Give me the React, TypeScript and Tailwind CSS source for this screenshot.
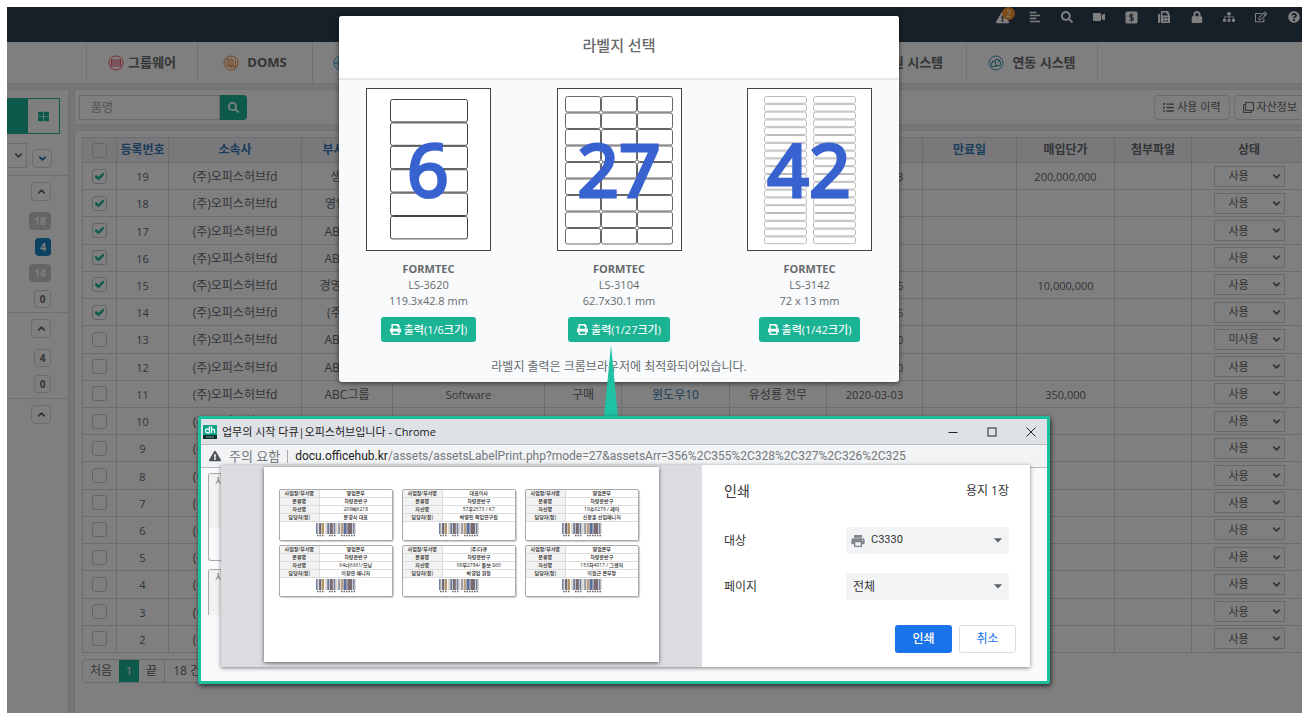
import { useState } from "react"
import {
  FaAlignLeft,
  FaCheck,
  FaExclamationTriangle,
  FaFax,
  FaListUl,
  FaLock,
  FaPrint,
  FaQuestionCircle,
  FaRegClone,
  FaRegEdit,
  FaSearch,
  FaSitemap,
  FaThLarge,
  FaVideo,
} from "react-icons/fa"
import { MdArrowDropDown, MdPrint } from "react-icons/md"
import { ChevronDown, ChevronUp } from "lucide-react"

const assets = [
  { id: 19, dept: "생산부", date: "2020-03-03", price: "200,000,000", checked: true },
  { id: 18, dept: "영업본부", checked: true },
  { id: 17, dept: "ABC그룹", checked: true },
  { id: 16, dept: "ABC그룹", checked: true },
  { id: 15, dept: "경영지원부", date: "2020-02-26", price: "10,000,000", checked: true },
  { id: 14, dept: "(주)다큐", date: "2020-02-26", checked: true },
  { id: 13, dept: "ABC그룹", date: "2020-02-20", status: "미사용" },
  { id: 12, dept: "ABC그룹", date: "2020-02-20" },
  { id: 11, dept: "ABC그룹", kind: "Software", how: "구매", name: "윈도우10", user: "유성룡 전무", date: "2020-03-03", price: "350,000" },
  { id: 10 },
  { id: 9 },
  { id: 8 },
  { id: 7 },
  { id: 6 },
  { id: 5 },
  { id: 4 },
  { id: 3 },
  { id: 2 },
]

const columns = [
  { id: "no", title: "등록번호", width: "w-[52px]", link: true },
  { id: "company", title: "소속사", width: "w-[133px]", link: true },
  { id: "dept", title: "부서/팀명", width: "w-[91px]", link: true },
  { id: "kind", title: "", width: "" },
  { id: "how", title: "", width: "w-[77px]" },
  { id: "name", title: "", width: "w-[108px]" },
  { id: "user", title: "", width: "w-[97px]" },
  { id: "date", title: "", width: "w-[96px]" },
  { id: "expire", title: "만료일", width: "w-[94px]", link: true },
  { id: "price", title: "매입단가", width: "w-[98px]" },
  { id: "file", title: "첨부파일", width: "w-[77px]" },
  { id: "status", title: "상태", width: "w-[115px]" },
]

const menus = [
  { id: "groupware", title: "그룹웨어", color: "text-[#ed5565]", width: "w-[111px] justify-center", gap: "gap-1", shape: "lines" },
  { id: "doms", title: "DOMS", color: "text-[#f8862f]", width: "w-[115px] justify-center", gap: "gap-2", shape: "docs" },
  { id: "home", title: "", color: "text-[#2c9fd8]", width: "w-[520px] pl-5", gap: "gap-2", shape: "globe" },
  { id: "support", title: "지원 시스템", color: "text-[#1c84c6]", width: "w-[134px] justify-center", gap: "gap-2", shape: "globe" },
  { id: "link", title: "연동 시스템", color: "text-[#3c9cb0]", width: "w-[132px] justify-center", gap: "gap-2", shape: "copy" },
]

const sheets = [
  { count: "6", code: "LS-3620", size: "119.3x42.8 mm", cols: 1, rows: 6, x: 24, y: 11, w: 77, pitchX: 0, pitchY: 23.4, stroke: "#444" },
  { count: "27", code: "LS-3104", size: "62.7x30.1 mm", cols: 3, rows: 9, x: 8, y: 8, w: 35, pitchX: 36, pitchY: 16.5, stroke: "#666" },
  { count: "42", code: "LS-3142", size: "72 x 13 mm", cols: 2, rows: 19, x: 17, y: 8, w: 42, pitchX: 49, pitchY: 7.8, stroke: "#bbb" },
]

const labels = [
  ["영업본부", "차량운반구", "209버6218", "문경식 대표"],
  ["대표이사", "차량운반구", "57우2573 / K7", "박영민 책임연구원"],
  ["영업본부", "차량운반구", "19수9279 / 레이", "신광훈 선임매니저"],
  ["영업본부", "차량운반구", "64너6361/모닝", "이창연 매니저"],
  ["(주)다큐", "차량운반구", "09부2784/ 볼보-S60", "박경업 회장"],
  ["영업본부", "차량운반구", "153하4917 / 그랜저", "이원근 본부장"],
]

const labelHeads = ["사업장/부서명", "분류명", "자산명", "담당자(정)"]

function MenuIcon({ shape }: { shape: string }) {
  return (
    <svg viewBox="0 0 16 16" className="h-4 w-4 shrink-0" fill="none" stroke="currentColor" strokeWidth="1">
      <circle cx="8" cy="8" r="7" />
      {shape === "lines" && <path d="M4 5h8M4 7h8M4 9h8M4 11h8M3.5 4.5v7M12.5 4.5v7" />}
      {shape === "docs" && <path d="M4 4h5l1 1v6H4zM5 6h4M5 8h4M5 10h4M11 6h1.5v6H6v-1" />}
      {shape === "globe" && <path d="M1 8h14M8 1v14M8 1c-4 4-4 10 0 14M8 1c4 4 4 10 0 14" />}
      {shape === "copy" && <path d="M7.5 4.5h3l2 2v4h-5zM10.5 4.5v2h2M7.5 6H5L3.5 7.5v4h5v-1M5 6v1.5H3.5" />}
    </svg>
  )
}

function DollarIcon() {
  return (
    <svg viewBox="0 0 14 14" className="h-[13px] w-[13px]">
      <rect x="0.5" y="0.5" width="13" height="13" rx="2" fill="currentColor" />
      <path d="M9 4.6C8.5 4 7.8 3.8 7 3.8c-1 0-2 .5-2 1.5 0 2 4 1.2 4 3.2 0 1-1 1.6-2 1.6-.9 0-1.7-.3-2.2-1M7 2.6v8.8" fill="none" stroke="#2f4050" strokeWidth="1.2" />
    </svg>
  )
}

function TopBar() {
  return (
    <header className="flex h-[35px] justify-end bg-[#2f4050] text-white">
      <div className="-mr-2 flex h-5 w-[324px] shrink-0 items-center justify-around text-[12px]">
        <button className="relative flex w-4 justify-center" aria-label="알림">
          <FaExclamationTriangle className="text-[13px]" />
          <span className="absolute -top-1 left-2 h-[13px] w-[13px] rounded-full bg-[#f8962f] text-center text-[9px] leading-[13px]">2</span>
        </button>
        <button className="flex w-4 justify-center" aria-label="메뉴"><FaAlignLeft /></button>
        <button className="flex w-4 justify-center" aria-label="검색"><FaSearch /></button>
        <button className="flex w-4 justify-center" aria-label="화상회의"><FaVideo /></button>
        <button className="flex w-4 justify-center" aria-label="결제"><DollarIcon /></button>
        <button className="flex w-4 justify-center" aria-label="팩스"><FaFax /></button>
        <button className="flex w-4 justify-center" aria-label="잠금"><FaLock /></button>
        <button className="flex w-4 justify-center" aria-label="조직도"><FaSitemap /></button>
        <button className="flex w-4 justify-center" aria-label="작성"><FaRegEdit /></button>
        <button className="flex w-4 justify-center" aria-label="도움말"><FaQuestionCircle /></button>
      </div>
    </header>
  )
}

function Nav() {
  return (
    <nav className="flex h-[42px] overflow-hidden border-b border-[#e0e2e6] bg-white pl-[79px] text-[13px] font-bold">
      {menus.map((menu) => (
        <a
          key={menu.id}
          href="#"
          className={`flex shrink-0 items-center border-l border-[#dfe2e5] whitespace-nowrap last:border-r ${menu.width} ${menu.gap}`}
        >
          <span className={menu.color}>
            <MenuIcon shape={menu.shape} />
          </span>
          {menu.title}
        </a>
      ))}
    </nav>
  )
}

function Toggle({ open }: { open?: boolean }) {
  return (
    <button className="flex h-[19px] w-5 items-center justify-center rounded-sm border border-[#d5d7d9]" aria-label="펼치기">
      {open ? <ChevronDown size={11} strokeWidth={4} className="text-[#1c6fb4]" /> : <ChevronUp size={11} strokeWidth={4} />}
    </button>
  )
}

function Sidebar() {
  const badge = "flex h-[18px] items-center justify-center rounded-sm text-[10px] font-bold"
  return (
    <aside className="w-[62px] shrink-0 overflow-hidden border-t border-r border-[#e0e2e6] bg-white">
      <div className="mt-2 flex h-9">
        <button className="w-5 bg-[#1ab394]" aria-label="목록" />
        <button className="flex w-[33px] items-center justify-center border border-[#1ab394] text-[11px] text-[#1ab394]" aria-label="그리드">
          <FaThLarge />
        </button>
      </div>
      <div className="mt-[9px] flex h-[33px] items-start gap-[5px] border-b border-[#dcdee0]">
        <label className="relative block h-[25px] w-5">
          <select aria-label="분류" className="h-full w-full appearance-none border border-l-0 border-[#d5d7d9]" />
          <ChevronDown size={11} strokeWidth={4} className="pointer-events-none absolute top-[7px] left-[6px]" />
        </label>
        <div className="mt-[6px]">
          <Toggle open />
        </div>
      </div>
      <div className="flex h-[137px] flex-col items-end border-b border-[#dcdee0] pt-[6px] pr-[17px]">
        <Toggle />
        <div className="mt-[11px] flex flex-col items-end gap-2">
          <span className={`${badge} w-[22px] bg-[#c8cacc] text-white`}>18</span>
          <span className={`${badge} w-4 bg-[#1c84c6] text-white`}>4</span>
          <span className={`${badge} w-[22px] bg-[#c8cacc] text-white`}>14</span>
          <span className={`${badge} w-[17px] border border-[#d5d7d9]`}>0</span>
        </div>
      </div>
      <div className="flex h-[86px] flex-col items-end border-b border-[#dcdee0] pt-[6px] pr-[17px]">
        <Toggle />
        <div className="mt-[11px] flex flex-col items-end gap-2">
          <span className={`${badge} w-[17px] border border-[#d5d7d9]`}>4</span>
          <span className={`${badge} w-[17px] border border-[#d5d7d9]`}>0</span>
        </div>
      </div>
      <div className="flex justify-end pt-[6px] pr-[17px]">
        <Toggle />
      </div>
    </aside>
  )
}

function CheckBox({ label, checked }: { label: string; checked?: boolean }) {
  return (
    <label className="relative mx-auto block h-[15px] w-[15px]">
      <input
        type="checkbox"
        aria-label={label}
        defaultChecked={checked}
        className="peer block h-[15px] w-[15px] appearance-none rounded-[3px] border border-[#c8cacc]"
      />
      <FaCheck
        stroke="currentColor"
        strokeWidth={50}
        className="pointer-events-none absolute top-[3px] left-[3px] hidden text-[9px] text-[#1ab394] peer-checked:block"
      />
    </label>
  )
}

function AssetTable() {
  const cell = "border border-[#d9dbde] p-0"
  const textCell = "border border-[#d9dbde] p-0 pt-[2px]"
  return (
    <table className="h-[516px] w-full table-fixed border-collapse text-center text-[12px] leading-4">
      <thead className="bg-[#f3f3f6]">
        <tr className="h-[25px]">
          <th className={`${cell} w-[34px]`}>
            <CheckBox label="전체 선택" />
          </th>
          {columns.map((col) => (
            <th key={col.id} className={`${cell} ${col.width} ${col.link ? "text-[#337ab7]" : ""}`}>
              {col.title}
            </th>
          ))}
        </tr>
      </thead>
      <tbody>
        {assets.map((asset) => (
          <tr key={asset.id} className="h-[27px]">
            <td className={cell}>
              <CheckBox label={`${asset.id} 선택`} checked={asset.checked} />
            </td>
            <td className={`${textCell} text-[11px]`}>{asset.id}</td>
            <td className={textCell}>(주)오피스허브fd</td>
            <td className={textCell}>{asset.dept}</td>
            <td className={`${textCell} text-[11px]`}>{asset.kind}</td>
            <td className={textCell}>{asset.how}</td>
            <td className={`${textCell} text-[#337ab7]`}>{asset.name}</td>
            <td className={textCell}>{asset.user}</td>
            <td className={`${textCell} text-[11px]`}>{asset.date}</td>
            <td className={cell}></td>
            <td className={`${textCell} text-[11px]`}>{asset.price}</td>
            <td className={cell}></td>
            <td className={cell}>
              <label className="relative mx-auto block h-[21px] w-[71px]">
                <select
                  aria-label="상태"
                  defaultValue={asset.status || "사용"}
                  className="block h-full w-full appearance-none border border-[#d0d2d5] pl-[14px] text-[11px] leading-4"
                >
                  <option>사용</option>
                  <option>미사용</option>
                </select>
                <ChevronDown size={11} strokeWidth={4} className="pointer-events-none absolute top-[5px] right-[3px]" />
              </label>
            </td>
          </tr>
        ))}
      </tbody>
    </table>
  )
}

function Content() {
  return (
    <main className="flex min-w-0 flex-1 flex-col gap-[5px] overflow-hidden">
      <div className="flex h-[36px] shrink-0 items-center border border-r-0 border-[#e0e2e6] bg-white pl-1">
        <input aria-label="품명" placeholder="품명" className="h-[25px] w-[141px] border border-[#d5d7d9] px-[11px] text-[12px] placeholder:text-[#aaa]" />
        <button className="flex h-[25px] w-[27px] items-center justify-center rounded-r-sm bg-[#1ab394] text-[11px] text-white" aria-label="검색">
          <FaSearch />
        </button>
        <div className="-mr-1 ml-auto flex gap-1 text-[11px]">
          <button className="flex h-[25px] items-center gap-[3px] rounded-sm border border-[#d5d7d9] px-2">
            <FaListUl /> 사용 이력
          </button>
          <button className="flex h-[25px] items-center gap-[3px] rounded-sm border border-[#d5d7d9] px-2">
            <FaRegClone /> 자산정보
          </button>
        </div>
      </div>
      <div className="-mr-[5px] flex-1 border-t border-l border-[#e0e2e6] bg-white pt-[6px] pl-[7px]">
        <AssetTable />
        <div className="mt-[6px] inline-flex h-6 items-center rounded-sm border border-[#d5d7d9] text-[12px]">
          <button className="h-full px-[7px]">처음</button>
          <button className="h-full w-5 bg-[#1ab394] text-[11px] text-white">1</button>
          <button className="h-full border-r border-[#d5d7d9] px-[7px]">끝</button>
          <span className="px-2">18 건</span>
        </div>
      </div>
    </main>
  )
}

function SheetPreview({ sheet }: { sheet: (typeof sheets)[number] }) {
  const cells = []
  for (let r = 0; r < sheet.rows; r++) {
    for (let c = 0; c < sheet.cols; c++) {
      cells.push(
        <rect
          key={`${r}-${c}`}
          x={sheet.x + c * sheet.pitchX + 0.5}
          y={sheet.y + r * sheet.pitchY + 0.5}
          width={sheet.w}
          height={sheet.pitchY - 1}
          rx="2"
          fill="none"
          stroke={sheet.stroke}
        />,
      )
    }
  }
  return (
    <svg viewBox="0 0 125 163" className="h-[163px] w-[125px]">
      <rect x="0.5" y="0.5" width="124" height="162" fill="#fff" stroke="#444" />
      {cells}
      <text x="62" y="109" textAnchor="middle" fontSize="73" fontFamily="Noto Sans" fill="#3862cf" stroke="#3862cf" strokeWidth="3">
        {sheet.count}
      </text>
    </svg>
  )
}

function LabelModal() {
  return (
    <div role="dialog" aria-label="라벨지 선택" className="absolute top-[9px] left-[332px] w-[560px] rounded-[3px] bg-[#f8fafc] shadow-[0_1px_5px_rgba(0,0,0,0.6)]">
      <h2 className="rounded-t-[3px] border-b-2 border-[#e7e9eb] bg-white pt-[18px] pb-[22px] text-center text-[15px] leading-[22px] font-medium">라벨지 선택</h2>
      <div className="flex justify-between px-[27px] pt-2">
        {sheets.map((sheet) => (
          <div key={sheet.count} className="flex w-[125px] flex-col items-center text-[11px] leading-4">
            <SheetPreview sheet={sheet} />
            <strong className="mt-[10px]">FORMTEC</strong>
            <span>{sheet.code}</span>
            <span>{sheet.size}</span>
            <button className="mt-2 flex h-[25px] items-center gap-[3px] rounded-[3px] bg-[#1ab394] px-[9px] font-medium whitespace-nowrap text-white">
              <FaPrint /> 출력(1/{sheet.count}크기)
            </button>
          </div>
        ))}
      </div>
      <p className="pt-[17px] pb-[7px] text-center text-[12px] leading-4">라벨지 출력은 크롬브라우저에 최적화되어있습니다.</p>
    </div>
  )
}

const bars = [1, 2, 1, 1, 2, 3, 1, 1, 2, 1, 1, 3, 1, 2, 1, 1, 2, 1, 3, 1, 1, 2, 1, 1]
const barColors = ["#6b7fa8", "#4a4a5e", "#b3926a", "#5a6f9c", "#7a6a72"]

function Barcode() {
  let x = 0
  return (
    <svg viewBox="0 0 40 14" className="mx-auto mt-px block h-[14px] w-10">
      <rect width="40" height="11" fill="#ddd8d2" />
      {bars.map((w, i) => {
        const left = x
        x += i % 2 ? w * 0.9 : w * 1.5
        return i % 2 ? null : <rect key={i} x={left} y="0" width={w * 1.5} height="11" fill={barColors[(i / 2) % 5]} />
      })}
      <path d="M8.5 0v11M22 0v11" stroke="#fff" />
      <path d="M1 12.5h7M13 12.5h7M25 12.5h14" stroke="#666" strokeWidth="1.5" strokeDasharray="1.5 1" />
    </svg>
  )
}

function AssetLabel({ values }: { values: string[] }) {
  return (
    <div className="h-[52px] w-[114px] overflow-hidden rounded-[2px] border border-[#a9a9a9] shadow-[1px_1px_1px_rgba(0,0,0,0.2)]">
      <table className="w-full table-fixed border-collapse text-center text-[5px] leading-[7px] font-medium text-[#222]">
        <tbody>
          {values.map((value, i) => (
            <tr key={labelHeads[i]} className="border-b border-[#dcdcdc]">
              <th className="w-[39px] border-r border-[#dcdcdc] bg-[#f2f2f2] p-0 font-medium whitespace-nowrap">{labelHeads[i]}</th>
              <td className="p-0 whitespace-nowrap">{value}</td>
            </tr>
          ))}
        </tbody>
      </table>
      <Barcode />
    </div>
  )
}

function PrintDialog() {
  const [printer, setPrinter] = useState("C3330")
  const [pages, setPages] = useState("전체")

  return (
    <div role="dialog" aria-label="인쇄" className="absolute top-[46px] right-[17px] left-5 flex h-[202px] bg-white shadow-[0_1px_4px_rgba(0,0,0,0.5)]">
      <div className="w-[481px] shrink-0 bg-[#dadce0] px-[43px] pt-[2px] pb-[5px]">
        <div className="h-full bg-white px-[15px] pt-[22px] shadow-[0_1px_4px_rgba(0,0,0,0.6)]">
          <div className="flex flex-wrap gap-x-[9px] gap-y-1">
            {labels.map((label) => (
              <AssetLabel key={label[2]} values={label} />
            ))}
          </div>
        </div>
      </div>
      <form className="flex-1 pt-4 pr-[21px] pl-[22px] text-[12px] text-[#333]">
        <div className="flex items-center justify-between">
          <h3 className="text-[14px] leading-5">인쇄</h3>
          <span className="leading-5">
            용지 <b className="font-medium">1</b>장
          </span>
        </div>
        <div className="mt-[26px] flex items-center justify-between">
          <label htmlFor="printer">대상</label>
          <div className="relative w-[163px]">
            <MdPrint className="pointer-events-none absolute top-[6px] left-1 text-[16px] text-[#80868b]" />
            <select
              id="printer"
              value={printer}
              onChange={(e) => setPrinter(e.target.value)}
              className="block h-[27px] w-full appearance-none rounded-[3px] bg-[#f1f3f4] pl-[25px] font-['Roboto','Noto_Sans_CJK_KR',sans-serif] text-[11px]"
            >
              <option>C3330</option>
            </select>
            <MdArrowDropDown className="pointer-events-none absolute top-[3px] right-[1px] text-[20px] text-[#5f6368]" />
          </div>
        </div>
        <div className="mt-[19px] flex items-center justify-between">
          <label htmlFor="pages">페이지</label>
          <div className="relative w-[163px]">
            <select
              id="pages"
              value={pages}
              onChange={(e) => setPages(e.target.value)}
              className="block h-[27px] w-full appearance-none rounded-[3px] bg-[#f1f3f4] pl-[7px]"
            >
              <option>전체</option>
            </select>
            <MdArrowDropDown className="pointer-events-none absolute top-[3px] right-[1px] text-[20px] text-[#5f6368]" />
          </div>
        </div>
        <div className="-mr-[7px] mt-[25px] flex justify-end gap-[7px]">
          <button type="button" className="h-7 w-[57px] rounded-[3px] bg-[#1a73e8] font-medium text-white">인쇄</button>
          <button type="button" className="h-7 w-[57px] rounded-[3px] border border-[#dadce0] text-[#1a73e8]">취소</button>
        </div>
      </form>
    </div>
  )
}

function ChromeWindow() {
  return (
    <section className="absolute top-[409px] left-[191px] flex h-[268px] w-[852px] flex-col rounded-[2px] border-[3px] border-[#1dbf9f] bg-[#f9fafc] shadow-[1px_2px_5px_rgba(0,0,0,0.7)]">
      <div className="flex h-[26px] items-center border-b border-[#b9bcc0] bg-[#dee1e6] pl-[2px]">
        <svg viewBox="0 0 14 14" className="h-[14px] w-[14px]">
          <rect width="14" height="10" fill="#0fa487" />
          <rect y="10" width="14" height="4" fill="#12302c" />
          <path d="M6.5 1.5v6.5M6.5 5.5a2 2 0 1 0-2 2.3h2M8.5 1.5v6.5M8.5 5.2c.8-1.2 3-1.2 3 .5v2.3" fill="none" stroke="#fff" strokeWidth="1.3" />
          <path d="M3 12h8" stroke="#7d9a96" strokeWidth="1" />
        </svg>
        <h2 className="ml-[5px] text-[11px] leading-4 text-[#222]">업무의 시작 다큐|오피스허브입니다 - Chrome</h2>
        <div className="ml-auto flex gap-[7px] text-[#222]">
          <button className="flex h-6 w-8 items-center justify-center" aria-label="최소화">
            <svg viewBox="0 0 10 10" className="h-[10px] w-[10px]"><path d="M0.5 5.5h9" stroke="currentColor" /></svg>
          </button>
          <button className="flex h-6 w-8 items-center justify-center" aria-label="최대화">
            <svg viewBox="0 0 10 10" className="h-[10px] w-[10px]"><rect x="1" y="1" width="8" height="8" fill="none" stroke="currentColor" /></svg>
          </button>
          <button className="flex h-6 w-8 items-center justify-center" aria-label="닫기">
            <svg viewBox="0 0 10 10" className="h-[10px] w-[10px]"><path d="M0.5 0.5l9 9M9.5 0.5l-9 9" stroke="currentColor" /></svg>
          </button>
        </div>
      </div>
      <div className="flex h-[23px] shrink-0 items-center border-b border-[#b9bcc0] bg-[#f1f3f4] pl-2 text-[12px] leading-4 whitespace-nowrap text-[#74787d]">
        <FaExclamationTriangle className="text-[#50545a]" />
        <span className="ml-2 text-[13px]">주의 요함</span>
        <span className="mx-[7px] h-[13px] w-px bg-[#a5a8ac]" />
        <p className="font-['Roboto',sans-serif]">
          <span className="text-[#222]">docu.officehub.kr</span>
          /assets/assetsLabelPrint.php?mode=27&amp;assetsArr=356%2C355%2C328%2C327%2C326%2C325
        </p>
      </div>
      {/* page behind the print dialog */}
      <div className="flex w-5 flex-col gap-2 pt-[5px] pl-[7px] text-[10px] leading-[14px]">
        <div className="h-[88px] overflow-hidden rounded-l-[3px] border border-r-0 border-[#aaa]">
          <div className="h-[54px] bg-[#f2f2f3] pl-[6px]">사</div>
        </div>
        <div className="h-[46px] overflow-hidden rounded-tl-[3px] border border-r-0 border-b-0 border-[#aaa]">
          <div className="h-full bg-[#f2f2f3] pl-[6px]">사</div>
        </div>
      </div>
      <PrintDialog />
    </section>
  )
}

export default function App() {
  return (
    <div className="h-screen bg-white pt-[7px] pr-[14px] pb-[10px] pl-[7px] font-['Open_Sans','Noto_Sans_CJK_KR',sans-serif] text-[#676a6c]">
      <div className="relative flex h-full flex-col overflow-hidden bg-[#ebecf3]">
        <TopBar />
        <Nav />
        <div className="flex min-h-0 flex-1 gap-[5px] pt-[5px]">
          <Sidebar />
          <Content />
        </div>

        <div className="absolute inset-0 bg-black/50" />
        <LabelModal />
        <svg viewBox="0 0 14 72" className="absolute top-[338px] left-[597px] h-[72px] w-[14px]">
          <path d="M7 0L14 72H0z" fill="#1fc2a2" />
        </svg>
        <ChromeWindow />
      </div>
    </div>
  )
}
